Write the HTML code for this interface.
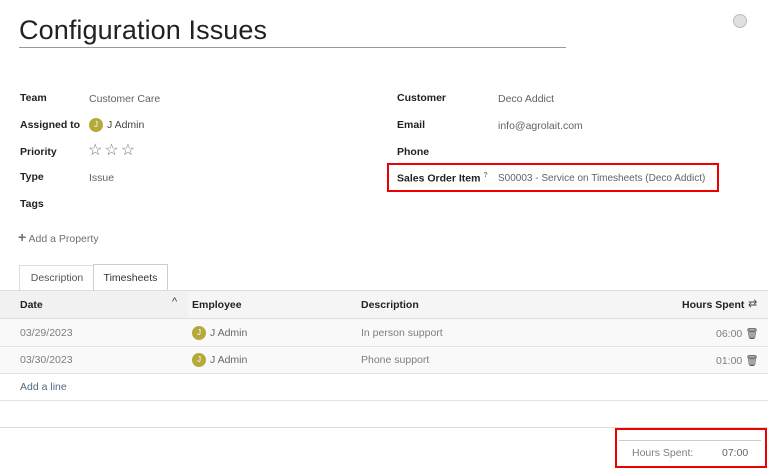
<!DOCTYPE html>
<html><head><meta charset="utf-8"><style>
body{margin:0;width:768px;height:469px;background:#fff;font-family:"Liberation Sans",sans-serif;position:relative;overflow:hidden;color:#212529}
.a{position:absolute;white-space:nowrap}
.l{font-size:10.5px;font-weight:bold;color:#222}
.v{font-size:10.5px;color:#5f636b}
.av{display:inline-block;width:14px;height:14px;border-radius:50%;background:#b5a93a;color:#fff;font-size:8px;text-align:center;line-height:14px;vertical-align:middle;margin-right:4px}
.td{font-size:10.5px;color:#7a7f86}
.hr{position:absolute;left:0;width:768px;height:1px;background:#e3e3e3}
</style></head><body>
<div class="a" style="left:19px;top:15px;font-size:27px;color:#222;letter-spacing:0.1px">Configuration Issues</div>
<div class="a" style="left:19px;top:47px;width:547px;height:1px;background:#999"></div>
<div class="a" style="left:733px;top:14px;width:12px;height:12px;border-radius:50%;background:#dfe0e2;border:1px solid #bbb"></div>

<div class="a l" style="left:20px;top:92px">Team</div><div class="a v" style="left:89px;top:93px">Customer Care</div>
<div class="a l" style="left:20px;top:119px">Assigned to</div><div class="a v" style="left:89px;top:118px;color:#444"><span class="av">J</span>J Admin</div>
<div class="a l" style="left:20px;top:146px">Priority</div><div class="a" style="left:88px;top:140px;font-size:16px;color:#777;letter-spacing:2px">☆☆☆</div>
<div class="a l" style="left:20px;top:171px">Type</div><div class="a v" style="left:89px;top:172px">Issue</div>
<div class="a l" style="left:20px;top:198px">Tags</div>
<div class="a" style="left:18px;top:229px;font-size:10.5px;color:#6c7077"><b style="font-size:14px">+</b> Add a Property</div>

<div class="a l" style="left:397px;top:92px">Customer</div><div class="a v" style="left:498px;top:93px">Deco Addict</div>
<div class="a l" style="left:397px;top:119px">Email</div><div class="a v" style="left:498px;top:120px">info@agrolait.com</div>
<div class="a l" style="left:397px;top:146px">Phone</div>
<div class="a" style="left:387px;top:163px;width:328px;height:25px;border:2px solid #e00"></div>
<div class="a l" style="left:397px;top:172px">Sales Order Item <sup style="font-size:7px;color:#777">?</sup></div><div class="a v" style="left:498px;top:173px;font-size:10px">S00003 - Service on Timesheets (Deco Addict)</div>

<div class="a" style="left:19px;top:265px;width:74px;height:25px;border:1px solid #ddd;border-bottom:none;font-size:10.5px;color:#555;text-align:center;line-height:25px">Description</div>
<div class="a" style="left:93px;top:264px;width:73px;height:27px;border:1px solid #ccc;border-bottom:none;background:#fff;font-size:10.5px;color:#333;text-align:center;line-height:27px">Timesheets</div>
<div class="hr" style="top:290px;background:#ddd"></div>
<div class="a" style="left:0;top:291px;width:768px;height:27px;background:#f1f1f1"></div>
<div class="a" style="left:188px;top:291px;width:580px;height:27px;background:#f5f5f5"></div>
<div class="a l" style="left:20px;top:299px;font-weight:bold">Date</div>
<div class="a" style="left:172px;top:296px;font-size:11px;color:#444">^</div>
<div class="a l" style="left:192px;top:299px">Employee</div>
<div class="a l" style="left:361px;top:299px">Description</div>
<div class="a l" style="left:682px;top:299px">Hours Spent</div>
<div class="a" style="left:748px;top:297px;font-size:11px;color:#444">⇄</div>
<div class="a" style="left:0;top:319px;width:768px;height:55px;background:#f9f9f9"></div>
<div class="hr" style="top:318px;background:#ddd"></div>
<div class="a td" style="left:20px;top:327px">03/29/2023</div>
<div class="a td" style="left:192px;top:326px;color:#666"><span class="av">J</span>J Admin</div>
<div class="a td" style="left:361px;top:327px">In person support</div>
<div class="a td" style="left:716px;top:327px">06:00 <span style="color:#444">🗑</span></div>
<div class="hr" style="top:346px"></div>
<div class="a td" style="left:20px;top:354px">03/30/2023</div>
<div class="a td" style="left:192px;top:353px;color:#666"><span class="av">J</span>J Admin</div>
<div class="a td" style="left:361px;top:354px">Phone support</div>
<div class="a td" style="left:716px;top:354px">01:00 <span style="color:#444">🗑</span></div>
<div class="hr" style="top:373px"></div>
<div class="a td" style="left:20px;top:381px;color:#4f6b86">Add a line</div>
<div class="hr" style="top:400px"></div>
<div class="hr" style="top:427px;background:#ddd"></div>
<div class="a" style="left:615px;top:428px;width:148px;height:36px;border:2px solid #e00"></div>
<div class="a" style="left:619px;top:440px;width:142px;height:1px;background:#ccc"></div>
<div class="a td" style="left:632px;top:447px">Hours Spent:</div>
<div class="a td" style="left:722px;top:447px;color:#666">07:00</div>
</body></html>
